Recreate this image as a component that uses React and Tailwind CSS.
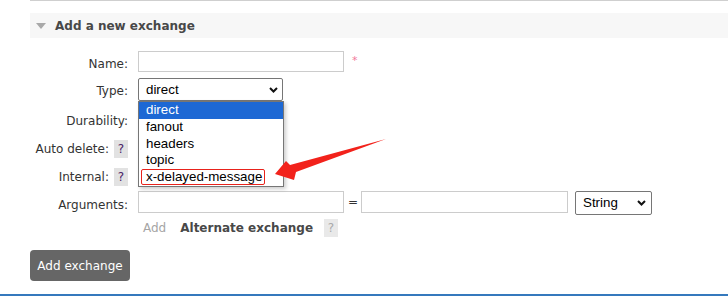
import React from 'react';

function Chevron() {
  return (
    <svg width="9" height="6" viewBox="0 0 9 6" className="shrink-0">
      <path d="M1 1 L4.5 4.5 L8 1" fill="none" stroke="#111" strokeWidth="2" />
    </svg>
  );
}

function Help({ muted }) {
  return (
    <span
      className={
        'inline-flex items-center justify-center w-[14px] h-[18px] text-[12px] leading-none ' +
        (muted ? 'bg-[#e9e9e9] text-[#aaa]' : 'bg-[#e2e2e2] text-[#4b2366]')
      }
    >
      ?
    </span>
  );
}

export default function App() {
  const options = ['direct', 'fanout', 'headers', 'topic'];

  return (
    <div className="relative w-[728px] h-[296px] bg-white overflow-hidden font-['DejaVu_Sans',sans-serif] text-[#333]">
      <div className="ml-[30px] h-px bg-[#cfcfcf]" />

      <div className="ml-[30px] mt-[12px] h-[25px] bg-[#f7f7f7] flex items-center pl-[6px]">
        <span className="w-0 h-0 border-x-[5px] border-x-transparent border-t-[6px] border-t-[#a9a9a9]" />
        <span className="ml-[9px] text-[12px] font-bold text-[#484848]">Add a new exchange</span>
      </div>

      <div className="mt-[13px] text-[12px] leading-[14px]">
        <div className="flex h-[27px]">
          <div className="w-[128px] text-right pt-[6px]">Name:</div>
          <div className="ml-[10px] flex items-start">
            <div className="w-[206px] h-[21px] border border-[#ccc] bg-white" />
            <span className="ml-[8px] mt-[4px] text-[11px] leading-none text-[#f27a9a]">*</span>
          </div>
        </div>

        <div className="flex h-[31px]">
          <div className="w-[128px] text-right pt-[6px]">Type:</div>
          <div className="ml-[10px]">
            <div className="w-[145px] h-[23px] border border-[#767676] rounded-[2px] pl-[7px] pr-[4px] flex items-center justify-between font-['Liberation_Sans',Arial,sans-serif] text-[13.33px] text-black">
              direct
              <Chevron />
            </div>
          </div>
        </div>

        <div className="flex h-[29px]">
          <div className="w-[128px] text-right pt-[5px]">Durability:</div>
        </div>

        <div className="flex h-[28px]">
          <div className="w-[128px] flex justify-end items-start">
            <span className="pt-[4px]">Auto delete:</span>
            <span className="ml-[5px] mt-[2px]"><Help /></span>
          </div>
        </div>

        <div className="flex h-[25px]">
          <div className="w-[128px] flex justify-end items-start">
            <span className="pt-[4px]">Internal:</span>
            <span className="ml-[5px] mt-[2px]"><Help /></span>
          </div>
        </div>

        <div className="flex h-[27px]">
          <div className="w-[128px] text-right pt-[7px]">Arguments:</div>
          <div className="ml-[10px] flex items-start">
            <div className="w-[206px] h-[22px] border border-[#ccc]" />
            <span className="ml-[4px] w-[10px] pt-[4px] text-center">=</span>
            <div className="ml-[3px] w-[207px] h-[22px] border border-[#ccc]" />
            <div className="ml-[7px] w-[77px] h-[24px] border border-[#767676] rounded-[2px] pl-[7px] pr-[5px] flex items-center justify-between font-['Liberation_Sans',Arial,sans-serif] text-[13.33px] text-black">
              String
              <Chevron />
            </div>
          </div>
        </div>

        <div className="flex h-[19px] items-center">
          <div className="w-[128px]" />
          <div className="ml-[15px] flex items-center">
            <span className="text-[#a5a5a5]">Add</span>
            <span className="ml-[14px] font-bold text-[#484848]">Alternate exchange</span>
            <span className="ml-[11px]"><Help muted /></span>
          </div>
        </div>
      </div>

      <button className="ml-[30px] mt-[13px] w-[100px] h-[31px] rounded-[4px] bg-[#666] text-white text-[12px] flex items-center justify-center">
        Add exchange
      </button>

      <div className="mt-[13px] h-[2px] bg-[#3579bd]" />

      {/* open select menu */}
      <div className="absolute left-[138px] top-[101px] w-[146px] h-[86px] border border-[#767676] bg-white shadow-[2px_2px_4px_rgba(0,0,0,0.2)] font-['Liberation_Sans',Arial,sans-serif] text-[13.33px] text-black">
        {options.map((o, i) => (
          <div
            key={o}
            className={
              'h-[16.75px] leading-[16.75px] pl-[7px] ' + (i === 0 ? 'bg-[#1d68d4] text-white' : '')
            }
          >
            {o}
          </div>
        ))}
        <div className="h-[16.75px] leading-[14px] pl-[2px]">
          <span className="inline-block border border-[#e8221b] rounded-[2px] pl-[4px] pr-[2px]">x-delayed-message</span>
        </div>
      </div>

      {/* annotation arrow */}
      <svg className="absolute left-0 top-0 pointer-events-none" width="728" height="296">
        <polygon
          points="275,174 286,161 290,165 386,139 296,172 294,180"
          fill="#f2221b"
        />
      </svg>
    </div>
  );
}
